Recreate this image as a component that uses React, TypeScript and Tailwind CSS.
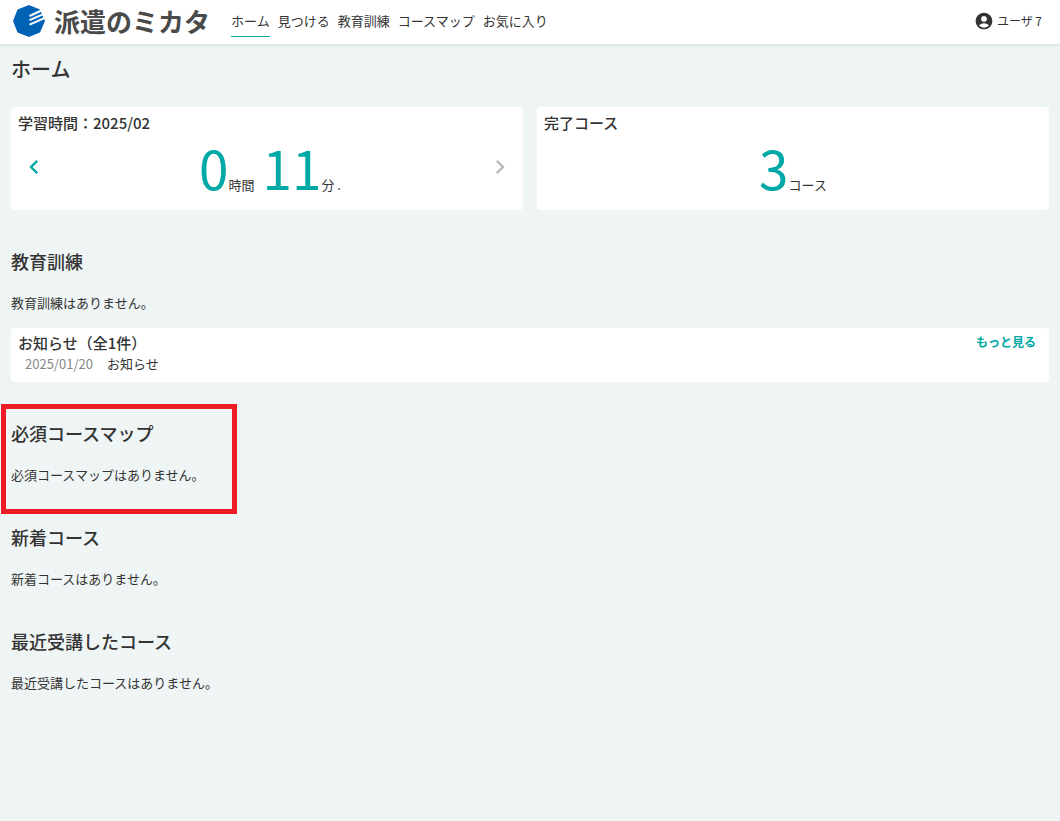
import { MdAccountCircle, MdChevronLeft, MdChevronRight } from "react-icons/md";

const navItems = ["ホーム", "見つける", "教育訓練", "コースマップ", "お気に入り"];

function Logo() {
  return (
    <a href="#" className="flex items-center gap-2 text-[#4a4a4a]">
      <svg width="34" height="34" viewBox="0 0 34 34" aria-hidden="true">
        <path d="M17 1L28 5.500L33 17L28 28.500L17 33L5.500 28.500L1 17L5.500 5.500Z" fill="#0062b5" />
        <path
          d="M17.500 12L30.500 6M17.500 16.200L32.500 9.600M17.500 20.600L34 13.400"
          stroke="#fff"
          strokeWidth="2"
          fill="none"
        />
      </svg>
      <span className="text-[26px] leading-9 font-bold">派遣のミカタ</span>
    </a>
  );
}

function Header() {
  return (
    <header className="relative flex h-11 items-center bg-white pr-[18px] pb-0.5 pl-3 shadow-[0_1px_4px_rgba(0,0,0,0.12)]">
      <Logo />
      <nav className="ml-[21px] flex gap-2 text-[13px] leading-5">
        {navItems.map((item, i) => (
          <a
            key={item}
            href="#"
            className={
              i === 0
                ? "border-b border-[#00a9a5] py-[5px]"
                : "border-b border-transparent py-[5px]"
            }
          >
            {item}
          </a>
        ))}
      </nav>
      <button type="button" className="ml-auto flex items-center gap-[3px] text-xs">
        <MdAccountCircle size={20} />
        ユーザ 7
      </button>
    </header>
  );
}

function BigNumber({ value }: { value: number }) {
  return <span className="text-[53px] leading-[64px] text-[#00a9a5]">{value}</span>;
}

function EmptySection({ title }: { title: string }) {
  return (
    <section>
      <h2 className="text-lg leading-6 font-medium">{title}</h2>
      <p className="mt-5 text-[13px] leading-5">{title}はありません。</p>
    </section>
  );
}

export default function App() {
  return (
    <div
      lang="ja"
      className="min-h-screen bg-[#eff5f5] font-['Noto_Sans_CJK_JP',sans-serif] text-[#333]"
    >
      <Header />
      <main className="p-[11px]">
        <h1 className="text-xl leading-7 font-medium">ホーム</h1>

        <div className="mt-6 grid grid-cols-2 gap-[14px]">
          <section className="rounded bg-white px-[7px] pt-1 pb-[11px]">
            <h2 className="text-[15px] leading-6 font-medium">学習時間：2025/02</h2>
            <div className="flex items-center justify-between">
              <button type="button" aria-label="前の月" className="ml-0.5 text-[#00a9a5]">
                <MdChevronLeft size={28} />
              </button>
              <p className="flex items-baseline pl-1.5 text-[13px]">
                <BigNumber value={0} />
                <span className="mr-2">時間</span>
                <BigNumber value={11} />
                <span>分 .</span>
              </p>
              <button type="button" aria-label="次の月" className="mr-0.5 text-[#bbb]" disabled>
                <MdChevronRight size={28} />
              </button>
            </div>
          </section>

          <section className="rounded bg-white px-[7px] pt-1 pb-[11px]">
            <h2 className="text-[15px] leading-6 font-medium">完了コース</h2>
            <p className="flex items-baseline justify-center text-[13px]">
              <BigNumber value={3} />
              <span>コース</span>
            </p>
          </section>
        </div>

        <div className="mt-[39px]">
          <EmptySection title="教育訓練" />
        </div>

        <section className="mt-[15px] flex items-start justify-between rounded bg-white px-[7px] pt-1 pb-2">
          <div>
            <h2 className="text-[15px] leading-[22px] font-medium">お知らせ（全1件）</h2>
            <p className="flex gap-3.5 pl-[7px] text-[13px] leading-5">
              <time className="text-[#888]">2025/01/20</time>
              <a href="#">お知らせ</a>
            </p>
          </div>
          <a href="#" className="mr-1.5 text-xs leading-5 font-bold text-[#00a9a5]">
            もっと見る
          </a>
        </section>

        <div className="mt-[39px] flex flex-col gap-10">
          <div className="relative">
            <EmptySection title="必須コースマップ" />
            {/* highlight frame */}
            <div className="pointer-events-none absolute -top-[17px] -left-2.5 h-[110px] w-[236px] border-5 border-[#ed1c24]" />
          </div>
          <EmptySection title="新着コース" />
          <EmptySection title="最近受講したコース" />
        </div>
      </main>
    </div>
  );
}
